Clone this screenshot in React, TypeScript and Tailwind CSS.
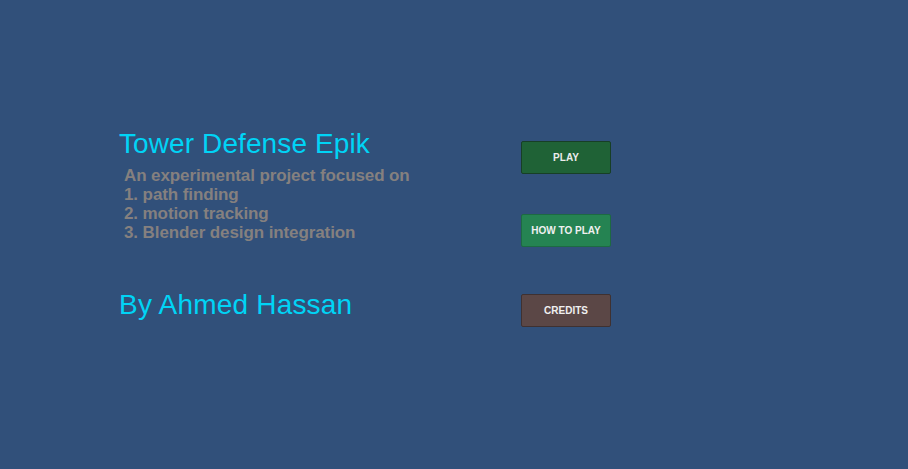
import React from "react";

export default function App() {
  const font = { fontFamily: '"Liberation Sans", Arial, sans-serif' };
  return (
    <div
      className="w-[908px] h-[469px] bg-[#31507a] flex overflow-hidden"
      style={font}
    >
      <div className="pl-[119px] pt-[128px] w-[521px] shrink-0 flex flex-col">
        <div className="text-[28px] leading-[32px] tracking-[0.1px] text-[#00d4f6] whitespace-nowrap">
          Tower Defense Epik
        </div>
        <div className="mt-[6px] pl-[5px] text-[17px] leading-[19px] tracking-[-0.1px] font-bold text-[#85807f] whitespace-nowrap">
          <div>An experimental project focused on</div>
          <div>1. path finding</div>
          <div>2. motion tracking</div>
          <div>3. Blender design integration</div>
        </div>
        <div className="mt-[47px] text-[28px] leading-[32px] tracking-[0.2px] text-[#00d4f6] whitespace-nowrap">
          By Ahmed Hassan
        </div>
      </div>
      <div className="pt-[141px] flex flex-col shrink-0">
        <button className="w-[90px] h-[33px] rounded-[2px] border border-[#173f26] bg-[#1f6236] text-[10px] font-bold text-[#ececec] flex items-center justify-center">
          PLAY
        </button>
        <button className="mt-[40px] w-[90px] h-[33px] rounded-[2px] border border-[#1d6a42] bg-[#258352] text-[10px] font-bold text-[#f0f0f0] flex items-center justify-center">
          HOW TO PLAY
        </button>
        <button className="mt-[47px] w-[90px] h-[33px] rounded-[2px] border border-[#3f3131] bg-[#5b4746] text-[10px] font-bold text-[#f0f0f0] flex items-center justify-center">
          CREDITS
        </button>
      </div>
    </div>
  );
}
